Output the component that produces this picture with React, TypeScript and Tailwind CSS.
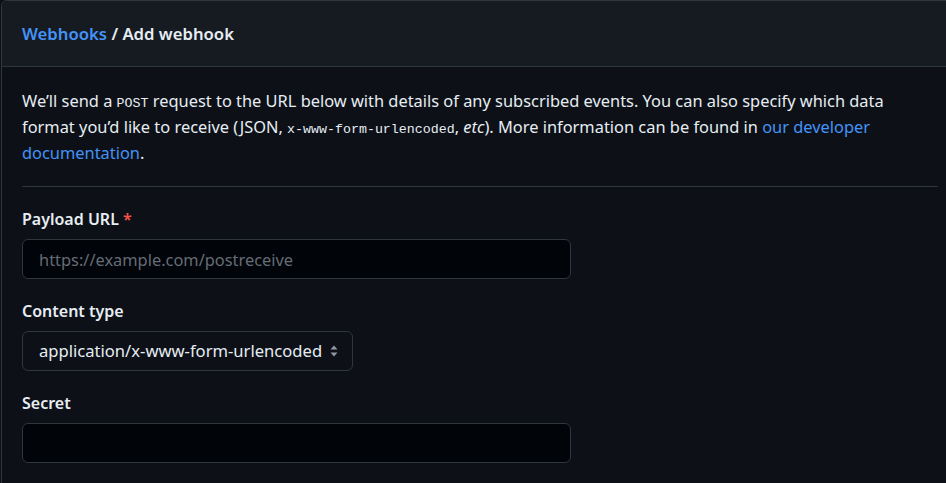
import { ReactNode } from "react";

const sans = "font-['Noto_Sans','Liberation_Sans',sans-serif]";
const mono = "font-['Liberation_Mono','DejaVu_Sans_Mono',monospace]";

function Field({ label, required, children }: { label: string; required?: boolean; children: ReactNode }) {
  return (
    <div className="mb-5">
      <label className="block text-[16px] leading-6 font-semibold text-[#e6edf3] mb-2">
        {label}
        {required && <span className="text-[#f85149] ml-1">*</span>}
      </label>
      {children}
    </div>
  );
}

function SelectArrows() {
  return (
    <svg width="10" height="14" viewBox="0 0 10 14" className="text-[#9198a1]">
      <path d="M5 1.5 L8.5 5.5 H1.5 Z" fill="currentColor" />
      <path d="M5 12.5 L8.5 8.5 H1.5 Z" fill="currentColor" />
    </svg>
  );
}

export default function App() {
  return (
    <div className={`w-[946px] h-[483px] overflow-hidden bg-[#0d1117] ${sans}`}>
      <div className="ml-px w-[958px] min-h-[540px] border border-[#30363d] rounded-t-md">
        <div className="h-[66px] flex items-center px-5 bg-[#161b22] border-b border-[#30363d] rounded-t-md">
          <h2 className="text-[16.7px] font-semibold text-[#e6edf3]">
            <a className="text-[#4493f8]">Webhooks</a> / Add webhook
          </h2>
        </div>
        <div className="px-5 pt-[21px]">
          <p className="text-[16.4px] leading-[26px] text-[#e6edf3] pb-5 border-b border-[#30363d]">
            We’ll send a <code className={`${mono} text-[13.3px] leading-none`}>POST</code> request to the URL below
            with details of any subscribed events. You can also specify which data format you’d like to receive
            (JSON, <code className={`${mono} text-[13.3px] leading-none`}>x-www-form-urlencoded</code>, <em>etc</em>).
            More information can be found in <a className="text-[#4493f8]">our developer documentation</a>.
          </p>
          <div className="pt-5">
            <Field label="Payload URL" required>
              <input
                className="w-[549px] h-10 px-4 rounded-md bg-[#010409] border border-[#30363d] text-[16.4px] text-[#e6edf3] placeholder:text-[#656c76] outline-none"
                placeholder="https://example.com/postreceive"
              />
            </Field>
            <Field label="Content type">
              <div className="w-[331px] flex items-center justify-between h-10 pl-4 pr-[13px] rounded-md bg-[#0d1117] border border-[#30363d] text-[16.6px] text-[#e6edf3]">
                <span>application/x-www-form-urlencoded</span>
                <SelectArrows />
              </div>
            </Field>
            <Field label="Secret">
              <input className="w-[549px] h-10 px-4 rounded-md bg-[#010409] border border-[#30363d] text-[16px] text-[#e6edf3] outline-none" />
            </Field>
          </div>
        </div>
      </div>
    </div>
  );
}
